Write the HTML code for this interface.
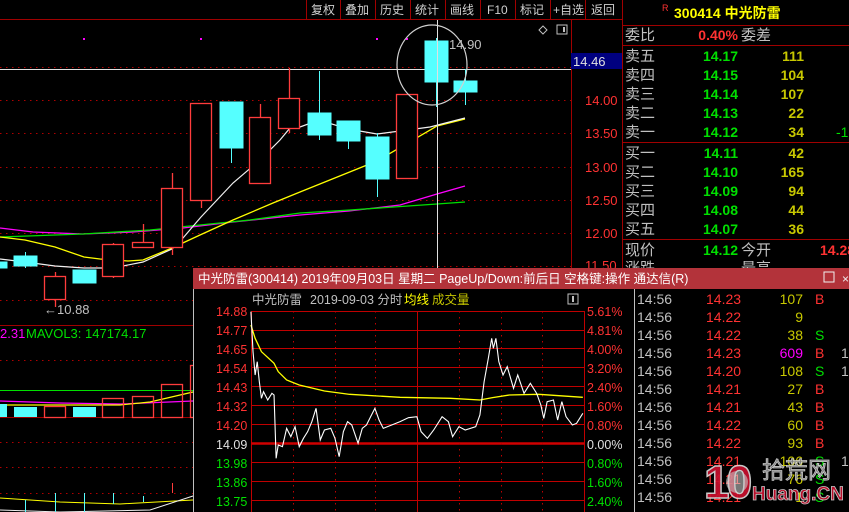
<!DOCTYPE html>
<html><head><meta charset="utf-8"><style>
html,body{margin:0;padding:0;background:#000;width:849px;height:512px;overflow:hidden}
svg{display:block}
text{font-family:"Liberation Sans","WenQuanYi Zen Hei","Noto Sans CJK SC",sans-serif;font-size:13px}
</style></head><body>
<svg width="849" height="512" viewBox="0 0 849 512" xmlns="http://www.w3.org/2000/svg">
<rect width="849" height="512" fill="#000"/>
<!-- toolbar -->
<line x1="0" y1="19.5" x2="622" y2="19.5" stroke="#a00000"/>
<g stroke="#a00000">
<line x1="306.5" y1="0" x2="306.5" y2="19"/><line x1="340.5" y1="0" x2="340.5" y2="19"/><line x1="375.5" y1="0" x2="375.5" y2="19"/><line x1="410.5" y1="0" x2="410.5" y2="19"/><line x1="445.5" y1="0" x2="445.5" y2="19"/><line x1="480.5" y1="0" x2="480.5" y2="19"/><line x1="515.5" y1="0" x2="515.5" y2="19"/><line x1="550.5" y1="0" x2="550.5" y2="19"/><line x1="585.5" y1="0" x2="585.5" y2="19"/>
</g>
<g fill="#d0d0d0" font-size="12">
<text x="311" y="14" style="font-size:12px">复权</text><text x="345" y="14" style="font-size:12px">叠加</text><text x="380" y="14" style="font-size:12px">历史</text><text x="415" y="14" style="font-size:12px">统计</text><text x="450" y="14" style="font-size:12px">画线</text><text x="487" y="14" style="font-size:12px">F10</text><text x="520" y="14" style="font-size:12px">标记</text><text x="553" y="14" style="font-size:12px">+自选</text><text x="591" y="14" style="font-size:12px">返回</text>
</g>
<!-- main chart grid -->
<g stroke="#b00000" stroke-dasharray="1.5,4.5">
<line x1="0" y1="67.5" x2="571" y2="67.5"/><line x1="0" y1="100.5" x2="571" y2="100.5"/><line x1="0" y1="133.5" x2="571" y2="133.5"/><line x1="0" y1="167.5" x2="571" y2="167.5"/><line x1="0" y1="200.5" x2="571" y2="200.5"/><line x1="0" y1="233.5" x2="571" y2="233.5"/><line x1="0" y1="266.5" x2="571" y2="266.5"/>
<line x1="0" y1="300.5" x2="193" y2="300.5"/>
<line x1="0" y1="360.5" x2="193" y2="360.5"/><line x1="0" y1="442.5" x2="193" y2="442.5"/><line x1="0" y1="467.5" x2="193" y2="467.5"/><line x1="0" y1="493.5" x2="193" y2="493.5"/>
</g>
<line x1="571.5" y1="20" x2="571.5" y2="268" stroke="#a00000"/>
<line x1="622.5" y1="0" x2="622.5" y2="268" stroke="#a00000"/>
<line x1="0" y1="69.5" x2="571" y2="69.5" stroke="#e0e0e0"/>
<line x1="0" y1="325.5" x2="193" y2="325.5" stroke="#a00000"/>
<line x1="0" y1="417.5" x2="193" y2="417.5" stroke="#a00000"/>
<line x1="0" y1="390.5" x2="193" y2="390.5" stroke="#00e000"/>
<!-- axis labels -->
<g fill="#ff3232">
<text x="585" y="105">14.00</text><text x="585" y="138">13.50</text><text x="585" y="172">13.00</text><text x="585" y="205">12.50</text><text x="585" y="238">12.00</text><text x="585" y="270">11.50</text>
</g>
<rect x="571" y="53" width="51" height="16" fill="#000080"/>
<text x="573" y="66" fill="#e0e0e0">14.46</text>
<!-- dots / icons -->
<rect x="83" y="38" width="2" height="2" fill="#ff00ff"/><rect x="200" y="38" width="2" height="2" fill="#ff00ff"/><rect x="376" y="38" width="2" height="2" fill="#ff00ff"/><rect x="406" y="38" width="2" height="2" fill="#ff00ff"/>
<path d="M543 26 L547 30 L543 34 L539 30 Z" fill="none" stroke="#c0c0c0"/>
<rect x="557" y="25" width="10" height="9" fill="none" stroke="#c0c0c0"/><rect x="563" y="27" width="2" height="5" fill="#c0c0c0"/>
<!-- MAs -->
<polyline fill="none" stroke="#ff00ff" stroke-width="1.3" points="0,228 33,232 83,234 133,232 183,228 233,222 300,215 349,211 400,205 437,194 465,186"/>
<polyline fill="none" stroke="#00e000" stroke-width="1.3" points="0,237 83,234 150,230 200,225 250,220 300,213 350,210 437,204 465,202"/>
<polyline fill="none" stroke="#ffff00" stroke-width="1.3" points="0,237 25,240 55,247 84,257 100,259 128,261 143,260 172,248 200,235 233,220 273,203 300,192 377,161 437,126 465,119"/>
<polyline fill="none" stroke="#f0f0f0" stroke-width="1.2" points="0,259 25,262 55,266 84,268 113,268 143,262 172,249 183,238 201,217 233,183 260,160 280,140 290,128 300,127 319,120 348,129 377,134 430,127 465,118"/>
<!-- candles -->
<g fill="#55ffff" stroke="#55ffff">
<rect x="0" y="262" width="7" height="6"/><line x1="25.5" y1="252" x2="25.5" y2="268"/><rect x="14" y="256" width="23" height="10"/>
<rect x="73" y="270" width="23" height="13"/>
<line x1="231.5" y1="102" x2="231.5" y2="163"/><rect x="220" y="102" width="23" height="46"/>
<line x1="319.5" y1="71" x2="319.5" y2="140"/><rect x="308" y="113" width="23" height="22"/>
<line x1="348.5" y1="121" x2="348.5" y2="149"/><rect x="337" y="121" width="23" height="20"/>
<line x1="377.5" y1="133" x2="377.5" y2="197"/><rect x="366" y="137" width="23" height="42"/>
<line x1="436.5" y1="38" x2="436.5" y2="107"/><rect x="425" y="41" width="23" height="41"/>
<line x1="465.5" y1="69" x2="465.5" y2="105"/><rect x="454" y="81" width="23" height="11"/>
</g>
<g fill="#000" stroke="#ff3c3c" stroke-width="1.3">
<line x1="55.5" y1="272" x2="55.5" y2="307"/><rect x="44.5" y="276.5" width="21" height="23"/>
<line x1="113.5" y1="243" x2="113.5" y2="278"/><rect x="102.5" y="244.5" width="21" height="32"/>
<line x1="143.5" y1="224" x2="143.5" y2="247"/><rect x="132.5" y="242.5" width="21" height="5"/>
<line x1="172.5" y1="173" x2="172.5" y2="255"/><rect x="161.5" y="188.5" width="21" height="59"/>
<line x1="201.5" y1="103" x2="201.5" y2="208"/><rect x="190.5" y="103.5" width="21" height="97"/>
<line x1="260.5" y1="104" x2="260.5" y2="117"/><rect x="249.5" y="117.5" width="21" height="66"/>
<line x1="289.5" y1="68" x2="289.5" y2="133"/><rect x="278.5" y="98.5" width="21" height="30"/>
<rect x="396.5" y="94.5" width="21" height="84"/>
</g>
<line x1="437.5" y1="20" x2="437.5" y2="268" stroke="#e0e0e0"/>
<ellipse cx="432" cy="65" rx="35" ry="40" fill="none" stroke="#d0d0d0" stroke-width="1.2"/>
<text x="449" y="49" fill="#c0c0c0">14.90</text>
<text x="44" y="314" fill="#c0c0c0">←10.88</text>
<!-- volume area -->
<polyline fill="none" stroke="#ff00ff" stroke-width="1.2" points="0,401 60,403 120,404 193,401"/>
<polyline fill="none" stroke="#ffff00" stroke-width="1.2" points="0,405 60,405 120,405 150,402 193,392"/>
<g fill="#55ffff"><rect x="0" y="404" width="7" height="13"/><rect x="14" y="407" width="23" height="10"/><rect x="73" y="407" width="23" height="10"/></g>
<g fill="none" stroke="#ff3c3c" stroke-width="1.3"><rect x="44.5" y="406.5" width="21" height="11"/><rect x="102.5" y="398.5" width="21" height="19"/><rect x="132.5" y="396.5" width="21" height="21"/><rect x="161.5" y="384.5" width="21" height="33"/><rect x="190.5" y="365.5" width="10" height="52"/></g>
<text x="0" y="338" fill="#ff00ff">2.31</text>
<text x="26" y="338" fill="#00e000">MAVOL3: 147174.17</text>
<polyline fill="none" stroke="#ffff00" points="0,498 60,502 120,504 193,500"/>
<polyline fill="none" stroke="#f0f0f0" points="0,510 60,512 150,510 193,496"/>
<g stroke="#55ffff"><line x1="25.5" y1="500" x2="25.5" y2="512"/><line x1="55.5" y1="493" x2="55.5" y2="512"/><line x1="84.5" y1="493" x2="84.5" y2="512"/><line x1="113.5" y1="493" x2="113.5" y2="504"/><line x1="143.5" y1="496" x2="143.5" y2="502"/></g>
<line x1="172.5" y1="483" x2="172.5" y2="493" stroke="#ff3c3c"/>
<!-- right panel -->
<line x1="622" y1="25.5" x2="849" y2="25.5" stroke="#a00000"/>
<line x1="622" y1="45.5" x2="849" y2="45.5" stroke="#a00000"/>
<line x1="622" y1="142.5" x2="849" y2="142.5" stroke="#a00000"/>
<line x1="622" y1="239.5" x2="849" y2="239.5" stroke="#a00000"/>
<text x="662" y="11" fill="#ff3232" style="font-size:9px">R</text>
<text x="674" y="18" fill="#ffff00" style="font-weight:bold;font-size:14px">300414 中光防雷</text>
<text x="625" y="40" fill="#c0c0c0" style="font-size:15px">委比</text>
<text x="738" y="40" fill="#ff3232" text-anchor="end" style="font-weight:bold;font-size:14px">0.40%</text>
<text x="741" y="40" fill="#c0c0c0" style="font-size:15px">委差</text>
<g style="font-size:15px" fill="#c0c0c0">
<text x="625" y="61" style="font-size:15px">卖五</text><text x="625" y="80" style="font-size:15px">卖四</text><text x="625" y="99" style="font-size:15px">卖三</text><text x="625" y="118" style="font-size:15px">卖二</text><text x="625" y="137" style="font-size:15px">卖一</text>
<text x="625" y="158" style="font-size:15px">买一</text><text x="625" y="177" style="font-size:15px">买二</text><text x="625" y="196" style="font-size:15px">买三</text><text x="625" y="215" style="font-size:15px">买四</text><text x="625" y="234" style="font-size:15px">买五</text>
<text x="625" y="255" style="font-size:15px">现价</text><text x="625" y="273" style="font-size:15px">涨跌</text>
<text x="741" y="255" style="font-size:15px">今开</text><text x="741" y="273" style="font-size:15px">最高</text>
</g>
<g fill="#00e000" text-anchor="end" style="font-weight:bold">
<text x="738" y="61" style="font-weight:bold;font-size:14px">14.17</text><text x="738" y="80" style="font-weight:bold;font-size:14px">14.15</text><text x="738" y="99" style="font-weight:bold;font-size:14px">14.14</text><text x="738" y="118" style="font-weight:bold;font-size:14px">14.13</text><text x="738" y="137" style="font-weight:bold;font-size:14px">14.12</text>
<text x="738" y="158" style="font-weight:bold;font-size:14px">14.11</text><text x="738" y="177" style="font-weight:bold;font-size:14px">14.10</text><text x="738" y="196" style="font-weight:bold;font-size:14px">14.09</text><text x="738" y="215" style="font-weight:bold;font-size:14px">14.08</text><text x="738" y="234" style="font-weight:bold;font-size:14px">14.07</text>
<text x="738" y="255" style="font-weight:bold;font-size:14px">14.12</text>
</g>
<g fill="#c8c800" text-anchor="end">
<text x="804" y="61" style="font-weight:bold;font-size:14px">111</text><text x="804" y="80" style="font-weight:bold;font-size:14px">104</text><text x="804" y="99" style="font-weight:bold;font-size:14px">107</text><text x="804" y="118" style="font-weight:bold;font-size:14px">22</text><text x="804" y="137" style="font-weight:bold;font-size:14px">34</text>
<text x="804" y="158" style="font-weight:bold;font-size:14px">42</text><text x="804" y="177" style="font-weight:bold;font-size:14px">165</text><text x="804" y="196" style="font-weight:bold;font-size:14px">94</text><text x="804" y="215" style="font-weight:bold;font-size:14px">44</text><text x="804" y="234" style="font-weight:bold;font-size:14px">36</text>
</g>
<text x="836" y="137" fill="#00e000" style="font-size:14px">-1</text>
<text x="820" y="255" fill="#ff3232" style="font-weight:bold;font-size:14px">14.28</text>
<!-- popup -->
<rect x="193" y="268" width="656" height="244" fill="#000"/>
<rect x="193" y="268" width="656" height="21" fill="#b3333a"/>
<line x1="193.5" y1="289" x2="193.5" y2="512" stroke="#c0c0c0"/>
<text x="198" y="283" fill="#ffffff" style="font-size:12.5px">中光防雷(300414) 2019年09月03日 星期二 PageUp/Down:前后日 空格键:操作 通达信(R)</text>
<rect x="824" y="272" width="10" height="10" fill="none" stroke="#f0f0f0"/>
<text x="842" y="283" fill="#f0f0f0" style="font-size:12px">×</text>
<text x="252" y="304" fill="#c0c0c0" style="font-size:12.5px">中光防雷</text>
<text x="310" y="304" fill="#c0c0c0" style="font-size:12.5px">2019-09-03 分时</text>
<text x="404" y="304" fill="#ffff00" style="font-size:12.5px">均线</text>
<text x="432" y="304" fill="#c8c800" style="font-size:12.5px">成交量</text>
<rect x="568" y="294" width="10" height="10" fill="none" stroke="#c0c0c0"/><rect x="572" y="296" width="2" height="6" fill="#c0c0c0"/>
<g stroke="#c00000">
<line x1="251" y1="311.5" x2="584" y2="311.5"/><line x1="251" y1="330.5" x2="584" y2="330.5"/><line x1="251" y1="348.5" x2="584" y2="348.5"/><line x1="251" y1="367.5" x2="584" y2="367.5"/><line x1="251" y1="386.5" x2="584" y2="386.5"/><line x1="251" y1="405.5" x2="584" y2="405.5"/><line x1="251" y1="424.5" x2="584" y2="424.5"/><line x1="251" y1="462.5" x2="584" y2="462.5"/><line x1="251" y1="481.5" x2="584" y2="481.5"/><line x1="251" y1="500.5" x2="584" y2="500.5"/>
<line x1="251.5" y1="311" x2="251.5" y2="512"/><line x1="584.5" y1="311" x2="584.5" y2="512"/><line x1="417.5" y1="311" x2="417.5" y2="512"/>
</g>
<line x1="251" y1="443.5" x2="584" y2="443.5" stroke="#d00000" stroke-width="2.5"/>
<g stroke="#c00000" stroke-dasharray="1.5,4.5">
<line x1="293.5" y1="311" x2="293.5" y2="512"/><line x1="335.5" y1="311" x2="335.5" y2="512"/><line x1="375.5" y1="311" x2="375.5" y2="512"/><line x1="459.5" y1="311" x2="459.5" y2="512"/><line x1="501.5" y1="311" x2="501.5" y2="512"/><line x1="542.5" y1="311" x2="542.5" y2="512"/>
</g>
<g transform="translate(190,265) scale(0.42017,0.33333)">
<polyline fill="none" stroke="#ffff00" stroke-width="1.3" vector-effect="non-scaling-stroke" points="145,180 155,220 170,260 200,295 210,320 230,345 260,360 320,378 380,388 500,397 620,400 690,405 720,398 760,390 830,388 935,397"/>
<polyline fill="none" stroke="#ffffff" stroke-width="1.1" vector-effect="non-scaling-stroke" points="145,140 150,260 155,330 160,290 165,350 170,400 175,380 185,405 195,385 200,390 205,580 210,540 220,545 230,490 240,515 250,485 260,545 270,520 280,500 290,470 300,430 310,525 320,495 335,490 345,520 355,575 365,500 375,470 385,480 400,535 410,490 420,480 430,455 440,430 450,465 460,490 480,480 500,470 520,458 540,455 550,500 565,520 580,495 600,455 615,470 625,515 640,485 655,495 680,485 690,450 700,350 710,280 718,220 722,250 728,220 735,290 745,330 755,305 770,370 780,330 795,385 810,355 825,385 835,420 842,460 850,410 865,405 875,465 885,410 895,455 910,480 920,475 935,445"/>
</g>
<g style="font-size:12.5px">
<text x="216" y="316" fill="#ff3232" style="font-size:12.5px">14.88</text><text x="216" y="335" fill="#ff3232" style="font-size:12.5px">14.77</text><text x="216" y="354" fill="#ff3232" style="font-size:12.5px">14.65</text><text x="216" y="373" fill="#ff3232" style="font-size:12.5px">14.54</text><text x="216" y="392" fill="#ff3232" style="font-size:12.5px">14.43</text><text x="216" y="411" fill="#ff3232" style="font-size:12.5px">14.32</text><text x="216" y="430" fill="#ff3232" style="font-size:12.5px">14.20</text><text x="216" y="449" fill="#e0e0e0" style="font-size:12.5px">14.09</text><text x="216" y="468" fill="#00e000" style="font-size:12.5px">13.98</text><text x="216" y="487" fill="#00e000" style="font-size:12.5px">13.86</text><text x="216" y="506" fill="#00e000" style="font-size:12.5px">13.75</text>
<text x="587" y="316" fill="#ff3232" style="font-size:12.5px">5.61%</text><text x="587" y="335" fill="#ff3232" style="font-size:12.5px">4.81%</text><text x="587" y="354" fill="#ff3232" style="font-size:12.5px">4.00%</text><text x="587" y="373" fill="#ff3232" style="font-size:12.5px">3.20%</text><text x="587" y="392" fill="#ff3232" style="font-size:12.5px">2.40%</text><text x="587" y="411" fill="#ff3232" style="font-size:12.5px">1.60%</text><text x="587" y="430" fill="#ff3232" style="font-size:12.5px">0.80%</text><text x="587" y="449" fill="#e0e0e0" style="font-size:12.5px">0.00%</text><text x="587" y="468" fill="#00e000" style="font-size:12.5px">0.80%</text><text x="587" y="487" fill="#00e000" style="font-size:12.5px">1.60%</text><text x="587" y="506" fill="#00e000" style="font-size:12.5px">2.40%</text>
</g>
<line x1="634.5" y1="289" x2="634.5" y2="512" stroke="#c0c0c0"/>
<g id="ticks">
<g fill="#c0c0c0">
<text x="637" y="304" style="font-size:14px">14:56</text><text x="637" y="322" style="font-size:14px">14:56</text><text x="637" y="340" style="font-size:14px">14:56</text><text x="637" y="358" style="font-size:14px">14:56</text><text x="637" y="376" style="font-size:14px">14:56</text><text x="637" y="394" style="font-size:14px">14:56</text><text x="637" y="412" style="font-size:14px">14:56</text><text x="637" y="430" style="font-size:14px">14:56</text><text x="637" y="448" style="font-size:14px">14:56</text><text x="637" y="466" style="font-size:14px">14:56</text><text x="637" y="484" style="font-size:14px">14:56</text><text x="637" y="502" style="font-size:14px">14:56</text>
</g>
<g fill="#ff3232">
<text x="706" y="304" style="font-size:14px">14.23</text><text x="706" y="322" style="font-size:14px">14.22</text><text x="706" y="340" style="font-size:14px">14.22</text><text x="706" y="358" style="font-size:14px">14.23</text><text x="706" y="376" style="font-size:14px">14.20</text><text x="706" y="394" style="font-size:14px">14.21</text><text x="706" y="412" style="font-size:14px">14.21</text><text x="706" y="430" style="font-size:14px">14.22</text><text x="706" y="448" style="font-size:14px">14.22</text><text x="706" y="466" style="font-size:14px">14.21</text><text x="706" y="484" style="font-size:14px">14.21</text><text x="706" y="502" style="font-size:14px">14.21</text>
</g>
<g fill="#c8c800" text-anchor="end">
<text x="803" y="304" style="font-size:14px">107</text><text x="803" y="322" style="font-size:14px">9</text><text x="803" y="340" style="font-size:14px">38</text><text x="803" y="358" fill="#ff00ff" style="font-size:14px">609</text><text x="803" y="376" style="font-size:14px">108</text><text x="803" y="394" style="font-size:14px">27</text><text x="803" y="412" style="font-size:14px">43</text><text x="803" y="430" style="font-size:14px">60</text><text x="803" y="448" style="font-size:14px">93</text><text x="803" y="466" style="font-size:14px">106</text><text x="803" y="484" style="font-size:14px">76</text><text x="803" y="502" style="font-size:14px">1</text>
</g>
<g style="font-size:14px">
<text x="815" y="304" fill="#ff3232" style="font-size:14px">B</text><text x="815" y="340" fill="#00e000" style="font-size:14px">S</text><text x="815" y="358" fill="#ff3232" style="font-size:14px">B</text><text x="815" y="376" fill="#00e000" style="font-size:14px">S</text><text x="815" y="394" fill="#ff3232" style="font-size:14px">B</text><text x="815" y="412" fill="#ff3232" style="font-size:14px">B</text><text x="815" y="430" fill="#ff3232" style="font-size:14px">B</text><text x="815" y="448" fill="#ff3232" style="font-size:14px">B</text><text x="815" y="466" fill="#00e000" style="font-size:14px">S</text><text x="815" y="484" fill="#00e000" style="font-size:14px">S</text><text x="815" y="502" fill="#00e000" style="font-size:14px">S</text>
<text x="841" y="358" fill="#c0c0c0" style="font-size:14px">1</text><text x="841" y="376" fill="#c0c0c0" style="font-size:14px">1</text><text x="841" y="466" fill="#c0c0c0" style="font-size:14px">1</text>
</g>
</g>
<!-- watermark -->
<g opacity="0.92">
<text x="704" y="498" fill="#c8102e" stroke="#d8d8d8" stroke-width="1.5" style="font-size:46px;font-weight:bold;font-family:'Liberation Sans',sans-serif;letter-spacing:-3px">10</text>
<circle cx="737" cy="482" r="11" fill="#d8d8d8" opacity="0.6"/>
<text x="762" y="478" fill="#808080" stroke="#d8d8d8" stroke-width="0.8" style="font-size:23px">拾荒网</text>
<text x="752" y="500" fill="#c8102e" stroke="#d8d8d8" stroke-width="0.8" style="font-size:19px;font-weight:bold">Huang.CN</text>
</g>
</svg>
</body></html>
